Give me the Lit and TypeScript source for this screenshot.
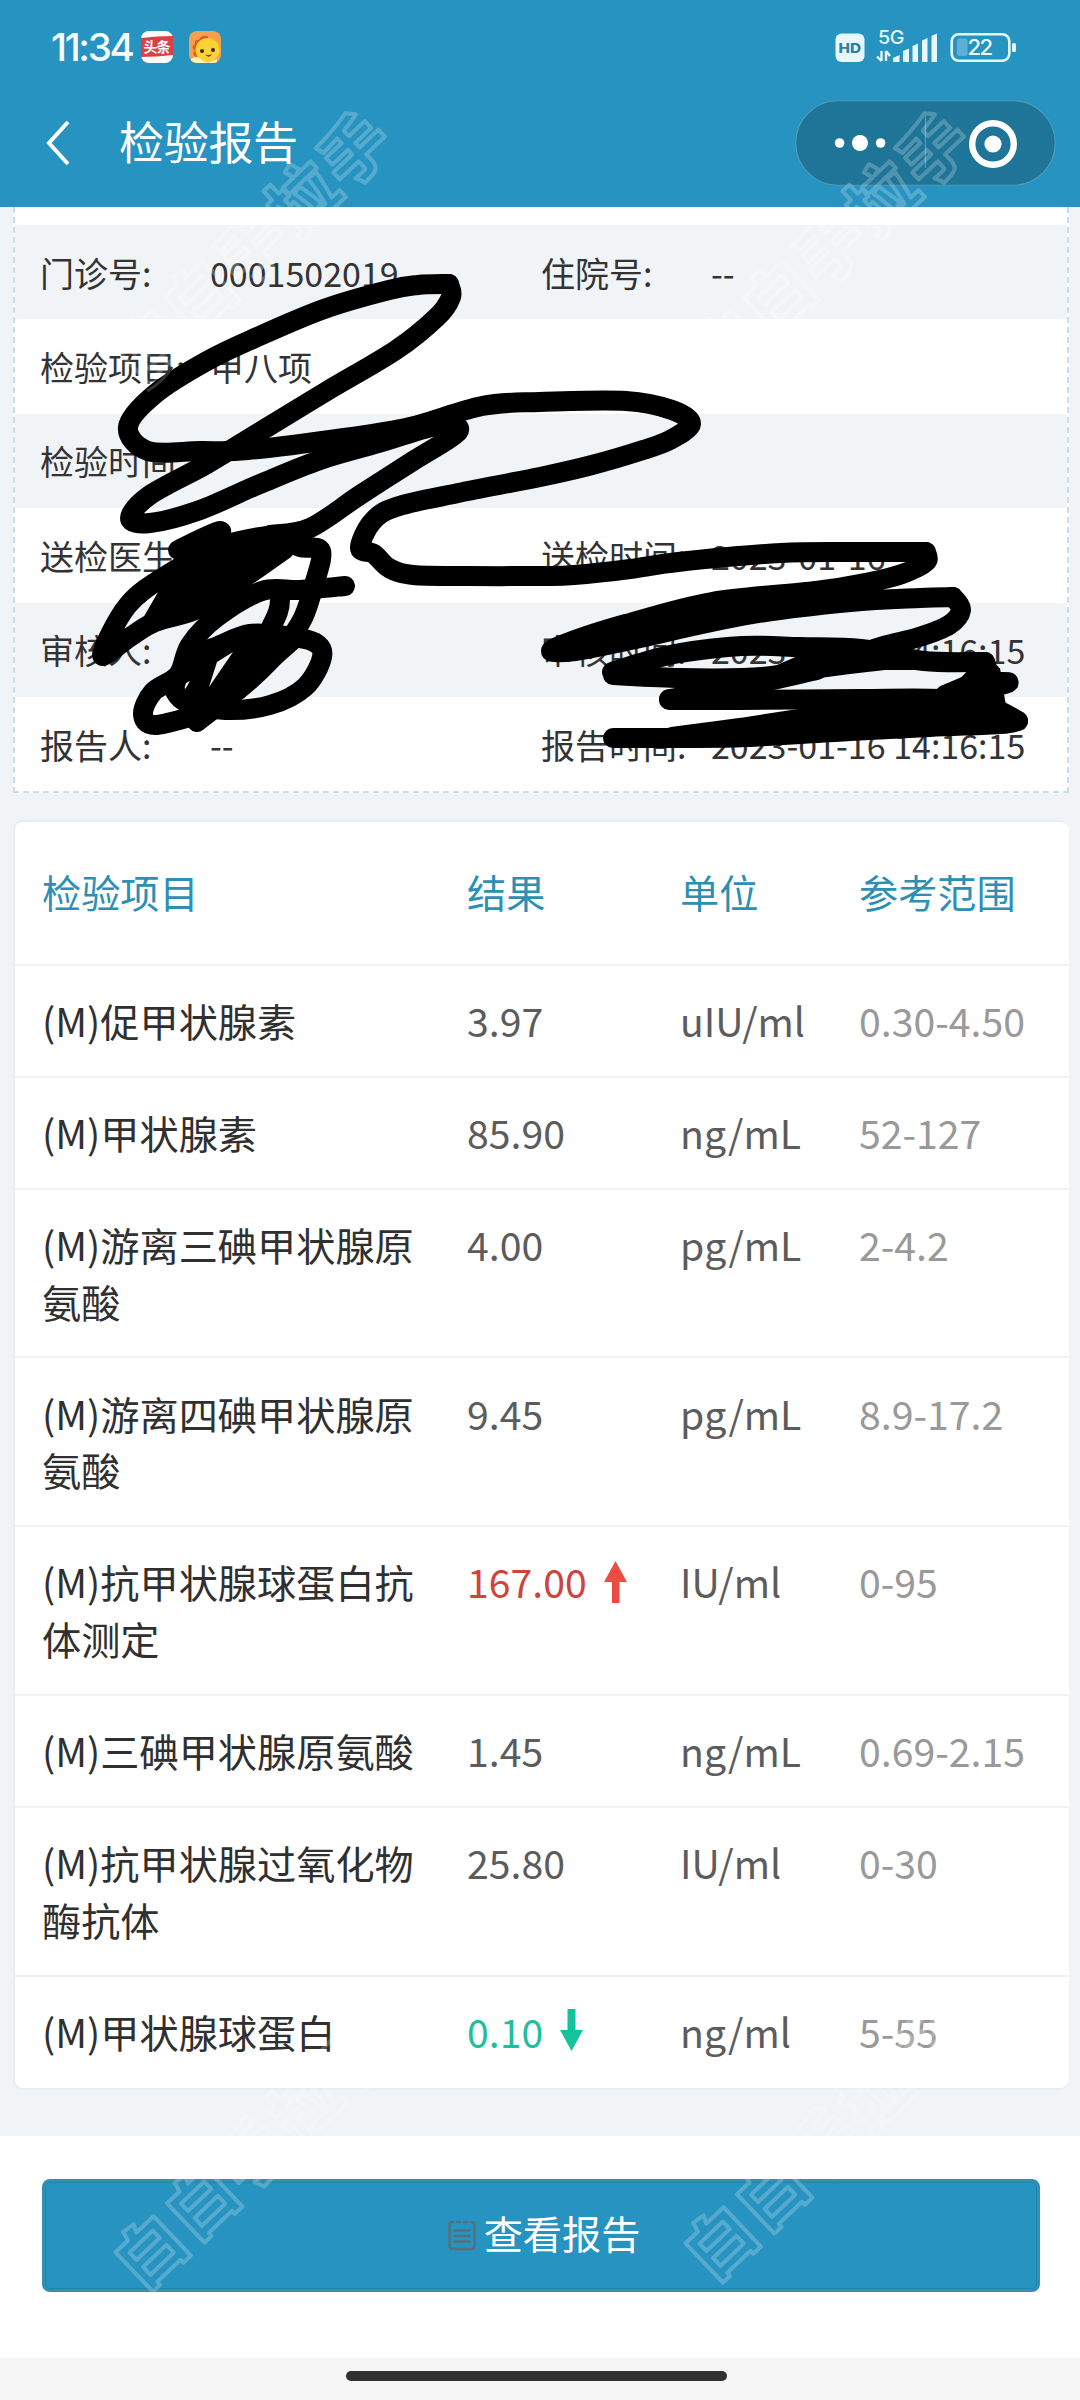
import { LitElement, html, css, svg, nothing } from "lit";
import { customElement } from "lit/decorators.js";

type Pt = [number, number];

/** Smooth curve running through every given point. */
function smooth(pts: Pt[]): string {
  let d = `M${pts[0][0]} ${pts[0][1]}`;
  for (let i = 0; i < pts.length - 1; i++) {
    const p0 = pts[Math.max(0, i - 1)];
    const p1 = pts[i];
    const p2 = pts[i + 1];
    const p3 = pts[Math.min(pts.length - 1, i + 2)];
    const n = (v: number) => v.toFixed(1);
    d += `C${n(p1[0] + (p2[0] - p0[0]) / 6)} ${n(p1[1] + (p2[1] - p0[1]) / 6)} ${n(p2[0] - (p3[0] - p1[0]) / 6)} ${n(p2[1] - (p3[1] - p1[1]) / 6)} ${p2[0]} ${p2[1]}`;
  }
  return d;
}

const STROKES: Pt[][] = [
  [[449, 284], [418, 285], [389, 290], [324, 309], [255, 338], [207, 361], [155, 394], [128, 427], [148, 451], [200, 451], [248, 450], [344, 438], [410, 427], [482, 406], [540, 402], [626, 401], [672, 410], [691, 424], [670, 440], [643, 450], [592, 465], [540, 477], [458, 493], [396, 507], [372, 522], [360, 548], [374, 554], [389, 568], [413, 575], [470, 576], [540, 576], [574, 575], [630, 569], [678, 562], [781, 553], [860, 552], [926, 552]],
  [[926, 552], [926, 562], [902, 574], [870, 582], [816, 591], [712, 602], [626, 624], [575, 640], [551, 651], [575, 651], [626, 641], [747, 615], [850, 602], [920, 598], [953, 597]],
  [[953, 597], [961, 610], [949, 625], [919, 637], [880, 647], [817, 667], [780, 675], [742, 678], [680, 678], [613, 675]],
  [[612, 672], [640, 663], [680, 653], [742, 646], [800, 647], [861, 649], [924, 661], [985, 662]],
  [[985, 662], [992, 680], [1008, 683], [970, 692], [936, 700]],
  [[669, 700], [740, 700], [860, 699], [940, 699], [988, 706], [1018, 721]],
  [[669, 699], [740, 687], [817, 670]],
  [[1018, 721], [1000, 724], [930, 727], [850, 731], [747, 737], [680, 738], [613, 738]],
  [[672, 737], [740, 728], [816, 717], [920, 708], [1000, 714]],
  [[560, 647], [650, 628], [740, 608], [860, 592]],
  [[945, 695], [975, 682], [990, 672]],
  [[449, 284], [451, 297], [437, 317], [396, 350], [327, 391], [258, 433], [207, 464], [150, 495], [130, 518], [150, 523], [200, 510], [260, 484], [320, 460], [379, 443], [440, 425], [458, 432], [413, 461], [360, 495], [310, 528], [270, 535]],
  [[178, 550], [220, 531], [210, 548]],
  [[272, 535], [225, 545], [170, 573], [128, 605], [102, 655], [130, 637], [155, 622], [200, 608], [245, 577], [285, 549]],
  [[278, 536], [300, 547], [321, 551], [314, 585], [303, 618], [286, 643], [250, 680], [197, 722]],
  [[345, 586], [300, 590], [262, 591], [217, 617], [190, 645], [178, 675], [153, 692], [143, 714], [155, 725], [200, 714]],
  [[280, 595], [278, 612], [262, 645], [238, 690]],
  [[220, 645], [250, 634], [285, 636], [314, 642], [322, 657], [305, 687], [270, 705], [225, 710], [186, 702], [174, 690]],
];

interface Info {
  label: string;
  value: string;
  label2?: string;
  value2?: string;
}

const INFO: Info[] = [
  { label: "门诊号:", value: "0001502019", label2: "住院号:", value2: "--" },
  { label: "检验项目:", value: "甲八项" },
  { label: "检验时间:", value: "" },
  { label: "送检医生:", value: "", label2: "送检时间:", value2: "2023-01-16" },
  { label: "审核人:", value: "", label2: "审核时间:", value2: "2023-01-16 14:16:15" },
  { label: "报告人:", value: "--", label2: "报告时间:", value2: "2023-01-16 14:16:15" },
];

interface Result {
  name: string;
  value: string;
  unit: string;
  range: string;
  flag?: "up" | "down";
}

const RESULTS: Result[] = [
  { name: "(M)促甲状腺素", value: "3.97", unit: "uIU/ml", range: "0.30-4.50" },
  { name: "(M)甲状腺素", value: "85.90", unit: "ng/mL", range: "52-127" },
  { name: "(M)游离三碘甲状腺原氨酸", value: "4.00", unit: "pg/mL", range: "2-4.2" },
  { name: "(M)游离四碘甲状腺原氨酸", value: "9.45", unit: "pg/mL", range: "8.9-17.2" },
  { name: "(M)抗甲状腺球蛋白抗体测定", value: "167.00", unit: "IU/ml", range: "0-95", flag: "up" },
  { name: "(M)三碘甲状腺原氨酸", value: "1.45", unit: "ng/mL", range: "0.69-2.15" },
  { name: "(M)抗甲状腺过氧化物酶抗体", value: "25.80", unit: "IU/ml", range: "0-30" },
  { name: "(M)甲状腺球蛋白", value: "0.10", unit: "ng/ml", range: "5-55", flag: "down" },
];

@customElement("status-bar")
class StatusBar extends LitElement {
  static styles = css`
    :host {
      display: flex;
      align-items: center;
      height: 94px;
      padding: 0 63px 0 51px;
      box-sizing: border-box;
      color: #f4fcff;
      font-family: Inter, "Liberation Sans", sans-serif;
    }
    .time { width: 90px; font-size: 38.5px; font-weight: 500; letter-spacing: -2.3px; white-space: nowrap; }
    .app { width: 32px; height: 32px; margin-right: 16px; }
    .right { display: flex; align-items: center; margin-left: auto; }
    svg { display: block; }
    .hd { font: 800 13px Inter, sans-serif; }
    .net { font: 500 18.5px Inter, sans-serif; letter-spacing: -0.4px; }
    .pct { font: 500 22px Inter, sans-serif; letter-spacing: -1.6px; }
    .logo { font: 700 14px "Noto Sans CJK SC", sans-serif; }
  `;
  render() {
    return html`
      <span class="time">11:34</span>
      <svg class="app" viewBox="0 0 32 32">
        <rect width="32" height="32" rx="8" fill="#fff" />
        <path d="M0 7Q16 5 32 5V24Q16 26 0 26Z" fill="#dc4045" />
        <text class="logo" x="2.5" y="21" fill="#fff" textLength="27">头条</text>
      </svg>
      <svg class="app" viewBox="0 0 32 32">
        <defs><clipPath id="c"><rect width="32" height="32" rx="8" /></clipPath></defs>
        <g clip-path="url(#c)">
          <rect width="32" height="32" fill="#f3a04f" />
          <path d="M7 26Q2 23 6 20Q1 16 6 13Q5 8 10 9Q12 4 18 5Q21 7 18 10L9 27Z" fill="#e8581f" />
          <circle cx="18.5" cy="19" r="12" fill="#fdd234" />
          <path d="M2 28Q8 23 14 30Q20 33 28 28V33H2Z" fill="#fff3b8" />
          <circle cx="13" cy="20" r="2" fill="#3b2616" /><circle cx="24" cy="19" r="2" fill="#3b2616" />
          <path d="M16 23.500Q20 25 23 23Q20 28 16 23.500Z" fill="#7c2d12" />
        </g>
      </svg>
      <div class="right">
        <svg width="182" height="54" viewBox="835 19 182 54">
          <rect x="835.500" y="32.500" width="29" height="28.500" rx="6" fill="#e6f7fd" />
          <text class="hd" x="838.500" y="51.500" fill="#2b7f9f" textLength="22.500" lengthAdjust="spacingAndGlyphs">HD</text>
          <text class="net" x="878" y="43" fill="#e6f7fd" textLength="26" lengthAdjust="spacingAndGlyphs">5G</text>
          <path d="M881.500 50V60M881.500 60L877 55.500M886 60V50M886 50L890 55" stroke="#e6f7fd" stroke-width="2.400" fill="none" />
          <path d="M893 57L899.500 54V61H893ZM903 50L909 47.500V61H903ZM912.500 45L918 42.500V61H912.500ZM922 39.500L927.500 37V61H922ZM931.500 35L937 32.500V61H931.500Z" fill="#e6f7fd" />
          <rect x="951.700" y="33.200" width="57.600" height="26.600" rx="7" fill="none" stroke="#e0f5fc" stroke-width="2.600" />
          <rect x="957" y="37.500" width="10.500" height="17.500" rx="2.500" fill="#5eb0d3" />
          <rect x="1012" y="42" width="4" height="9" rx="1.500" fill="#e0f5fc" />
          <text class="pct" x="967.500" y="54" fill="#f0fbff" textLength="24" lengthAdjust="spacingAndGlyphs">22</text>
        </svg>
      </div>
    `;
  }
}

@customElement("nav-bar")
class NavBar extends LitElement {
  static styles = css`
    :host { display: flex; align-items: center; height: 98px; padding: 0 24px 0 45px; box-sizing: border-box; }
    .back { width: 26px; height: 48px; }
    .title {
      margin: 0 auto 5px 48px;
      color: #fff;
      font: 400 45px/60px "Noto Sans CJK SC", sans-serif;
      letter-spacing: -0.3px;
    }
    .capsule { width: 261px; height: 86px; }
    svg { display: block; }
  `;
  render() {
    return html`
      <svg class="back" viewBox="0 0 26 48"><path d="M23 3L4 24L23 45" fill="none" stroke="#fff" stroke-width="4" /></svg>
      <h1 class="title">检验报告</h1>
      <svg class="capsule" viewBox="0 0 261 86">
        <rect x=".75" y=".75" width="259.500" height="84.500" rx="42.200" fill="#1f7598" stroke="#4f9ab8" stroke-width="1.200" />
        <circle cx="44.600" cy="43" r="4.800" fill="#fff" /><circle cx="65" cy="43" r="8" fill="#fff" /><circle cx="85.600" cy="43" r="4.800" fill="#fff" />
        <path d="M130.500 15.500V68" stroke="#5c9db7" stroke-width="1.200" />
        <circle cx="198" cy="44" r="20.800" fill="none" stroke="#fff" stroke-width="6.400" /><circle cx="198" cy="44" r="8.600" fill="#fff" />
      </svg>
    `;
  }
}

@customElement("info-card")
class InfoCard extends LitElement {
  static styles = css`
    :host {
      display: block;
      padding-top: 18px;
      background: #fff;
      border: 2px dashed #c9deec;
      border-top: 0;
      color: #333;
      font: 400 34px/50px "Noto Sans CJK SC", sans-serif;
    }
    .row {
      display: grid;
      grid-template-columns: 170px 331px 170px 1fr;
      align-items: center;
      height: 94.4px;
      padding: 1px 0 0 25px;
      box-sizing: border-box;
      white-space: nowrap;
    }
    .row:nth-child(odd) { background: #f1f4f7; }
  `;
  render() {
    return INFO.map(
      (r) => html`<div class="row">
        <span>${r.label}</span><span>${r.value}</span>
        ${r.label2 ? html`<span>${r.label2}</span><span>${r.value2}</span>` : nothing}
      </div>`
    );
  }
}

@customElement("result-table")
class ResultTable extends LitElement {
  static styles = css`
    :host {
      display: block;
      background: #fff;
      border: 2px solid #e9edf1;
      border-right: 0;
      border-radius: 10px;
      font: 400 39.2px/56.8px "Noto Sans CJK SC", sans-serif;
    }
    .row {
      display: grid;
      grid-template-columns: 425px 213px 179px 1fr;
      align-items: start;
      padding: 26.1px 0 27.1px 27px;
      border-bottom: 2px solid #f1f2f4;
      white-space: nowrap;
    }
    .row > :first-child { margin-right: 25px; }
    .row:last-child { padding-bottom: 28.5px; border-bottom: 0; }
    .row.head { padding: 41px 0 43.6px 27px; color: #2d8fb4; }
    .name { color: #303030; white-space: normal; word-break: break-all; }
    .value { display: flex; align-items: flex-start; color: #5c5c5c; }
    .unit { color: #5c5c5c; }
    .range { color: #999; }
    .up { color: #d0433d; }
    .down { color: #1fbf9d; }
    .arrow { width: 23px; height: 42px; margin: 8px 0 0 17px; }
    .down .arrow { margin-top: 6px; }
  `;
  render() {
    return html`
      <div class="row head"><span>检验项目</span><span>结果</span><span>单位</span><span>参考范围</span></div>
      ${RESULTS.map(
        (r) => html`<div class="row">
          <span class="name">${r.name}</span>
          <span class="value ${r.flag ?? ""}">${r.value}${
            r.flag === "up"
              ? html`<svg class="arrow" viewBox="0 0 23 42"><path d="M11.500 0L23 21H15.500V42H8V21H0Z" fill="#f04a45" /></svg>`
              : r.flag === "down"
              ? html`<svg class="arrow" viewBox="0 0 23 42"><path d="M11.500 42L23 21H15.500V0H7.500V21H0Z" fill="#15c29b" /></svg>`
              : nothing
          }</span>
          <span class="unit">${r.unit}</span>
          <span class="range">${r.range}</span>
        </div>`
      )}
    `;
  }
}

@customElement("app-root")
class AppRoot extends LitElement {
  static styles = css`
    :host {
      display: flex;
      flex-direction: column;
      position: relative;
      width: 1080px;
      height: 2400px;
      overflow: hidden;
      background: #f0f4f7;
    }
    .top { height: 207px; background: #2693c1; }
    .content { display: flex; flex-direction: column; gap: 27px; height: 1929px; padding: 0 11px 0 13px; box-sizing: border-box; }
    .footer { display: flex; flex-direction: column; height: 222px; padding: 43px 40px 0 42px; box-sizing: border-box; background: #fff; }
    .button {
      display: flex;
      align-items: center;
      justify-content: center;
      gap: 8px;
      height: 113px;
      padding: 0 0 0 6px;
      border: 3px solid #3290b2;
      border-radius: 8px;
      box-sizing: border-box;
      background: #2693c1;
      box-shadow: inset 0 0 0 1px #1c86ad;
      color: #fff;
      font: 400 39.2px/57px "Noto Sans CJK SC", sans-serif;
    }
    .button svg { width: 28px; height: 31px; }
    .button span { margin-bottom: 7px; }
    .home { display: flex; justify-content: center; height: 42px; padding: 13px 7px 0 0; box-sizing: border-box; background: #f6f6f6; }
    .pill { width: 381px; height: 10px; border-radius: 5px; background: #303030; }
    .overlay { position: absolute; left: 0; top: 0; width: 1080px; height: 2400px; pointer-events: none; }
    .mark { font: 900 67px "Noto Sans CJK SC", sans-serif; letter-spacing: 4px; fill: none; stroke: #fff; stroke-opacity: 0.22; stroke-width: 4; stroke-linejoin: round; }
  `;
  render() {
    const marks: Pt[] = [[252, 248], [831, 248], [254, 2154], [824, 2145]];
    return html`
      <header class="top"><status-bar></status-bar><nav-bar></nav-bar></header>
      <main class="content"><info-card></info-card><result-table></result-table></main>
      <footer class="footer">
        <div class="button">
          <svg viewBox="0 0 28 31">
            <path d="M5 2Q1.500 2 1.500 5V26Q1.500 29 5 29H23Q26.500 29 26.500 26V5Q26.500 2 23 2M9 2H12M16 2H19M6.500 10.500H21.500M6.500 16H21.500M6.500 21.500H21.500" fill="none" stroke="#566f7c" stroke-width="2.400" stroke-linecap="round" />
          </svg>
          <span>查看报告</span>
        </div>
      </footer>
      <div class="home"><div class="pill"></div></div>
      <svg class="overlay" viewBox="0 0 1080 2400">
        ${marks.map(([x, y]) => svg`<text class="mark" text-anchor="middle" transform="translate(${x} ${y}) rotate(-43.500)" x="2" y="24">白白手拉手</text>`)}
        ${STROKES.map((s) => svg`<path d=${smooth(s)} fill="none" stroke="#000" stroke-width="20" stroke-linecap="round" stroke-linejoin="round" />`)}
        <path d="M165 580L175 560L215 540L273 528L300 545L245 583L205 613L150 634L135 632Z" />
        <path fill-rule="evenodd" d="M205 640L242 628L299 633L302 645L240 700L199 728L174 703L176 673ZM209 687L233 652L217 662ZM183 693L190 681L186 683Z" />
        <path d="M600 636L760 600L870 584L870 600L740 624L600 650Z" />
        <path d="M770 668L800 655L861 646L945 656L960 670L885 670L850 674L760 686Z" />
        <path d="M945 695L970 668L1000 668L1005 700L1010 725L850 728L850 700Z" />
        <path d="M147 391Q162 383 172 367" fill="none" stroke="#333" stroke-width="3" />
      </svg>
    `;
  }
}
